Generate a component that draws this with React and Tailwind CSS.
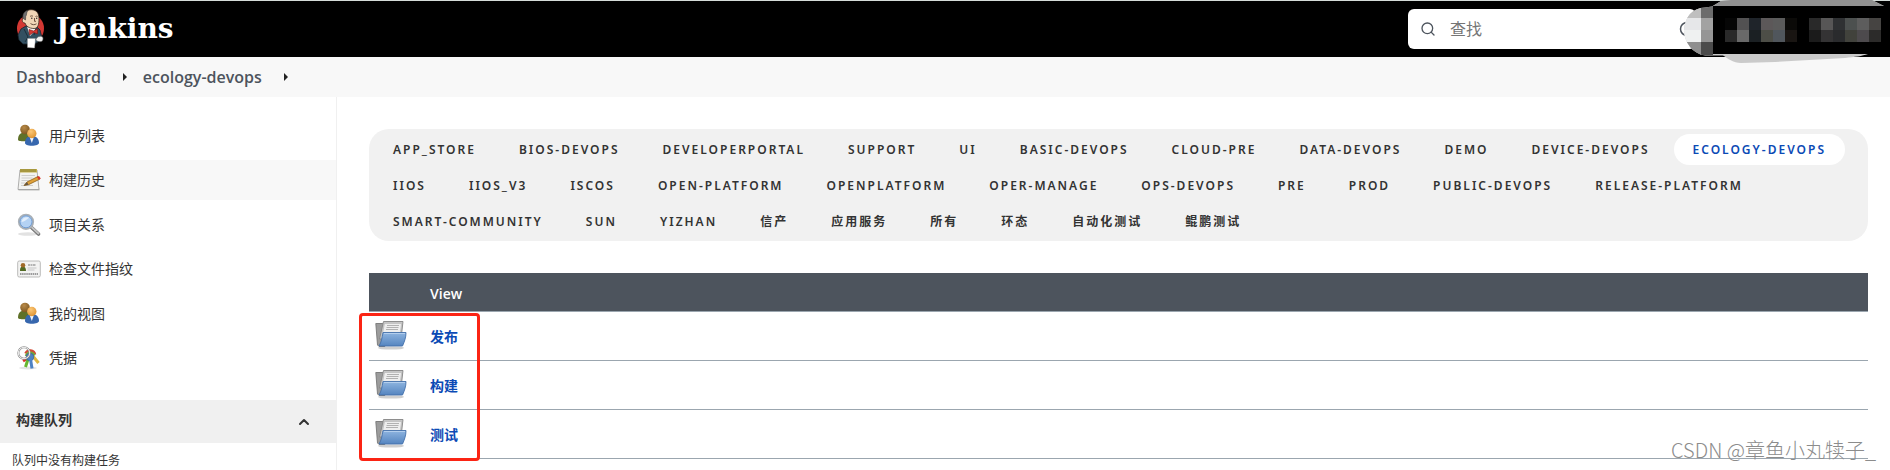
import { ChevronUp, Search } from "lucide-react";
import clsx from "clsx";

const VIEWS = [
  "APP_STORE",
  "BIOS-DEVOPS",
  "DEVELOPERPORTAL",
  "SUPPORT",
  "UI",
  "BASIC-DEVOPS",
  "CLOUD-PRE",
  "DATA-DEVOPS",
  "DEMO",
  "DEVICE-DEVOPS",
  "ECOLOGY-DEVOPS",
  "IIOS",
  "IIOS_V3",
  "ISCOS",
  "OPEN-PLATFORM",
  "OPENPLATFORM",
  "OPER-MANAGE",
  "OPS-DEVOPS",
  "PRE",
  "PROD",
  "PUBLIC-DEVOPS",
  "RELEASE-PLATFORM",
  "SMART-COMMUNITY",
  "SUN",
  "YIZHAN",
  "信产",
  "应用服务",
  "所有",
  "环态",
  "自动化测试",
  "鲲鹏测试",
];

const ACTIVE_VIEW = "ECOLOGY-DEVOPS";

const TASKS = [
  { label: "用户列表", icon: PeopleIcon },
  { label: "构建历史", icon: NotepadIcon, hovered: true },
  { label: "项目关系", icon: MagnifierIcon },
  { label: "检查文件指纹", icon: CardIcon },
  { label: "我的视图", icon: PeopleIcon },
  { label: "凭据", icon: KeysIcon },
];

const FOLDERS = ["发布", "构建", "测试"];

// Pixelated patches over the user name: x, y, colour
const PATCHES = [
  [50, 18, "#060606"], [62, 18, "#525152"], [74, 18, "#1f242a"], [86, 18, "#5c5859"], [98, 18, "#5b5b5b"], [110, 18, "#0b0a08"],
  [50, 30, "#292929"], [62, 30, "#696969"], [74, 30, "#1b2023"], [86, 30, "#4d4e47"], [98, 30, "#50565c"], [110, 30, "#191512"],
  [134, 18, "#292929"], [146, 18, "#575656"], [158, 18, "#2f3133"], [170, 18, "#4c504f"], [182, 18, "#5d5d5d"], [194, 18, "#464442"],
  [134, 30, "#1b1b1b"], [146, 30, "#343334"], [158, 30, "#2a2b2d"], [170, 30, "#41423c"], [182, 30, "#4d4a4d"], [194, 30, "#2c2b2a"],
];

function JenkinsLogo() {
  return (
    <svg viewBox="0 0 28 40" className="h-10 w-7" aria-hidden="true">
      <ellipse cx="14.5" cy="19.5" rx="13.5" ry="14" fill="#d33833" />
      <path d="M5 20 10 17h10l4 4 2 8-4 4-4 2H7l-4-4-1-5z" fill="#335061" stroke="#16252f" strokeWidth=".8" />
      <path d="M11 17.500 14 27l6-6-1-4z" fill="#f4f4f4" />
      <path d="M8 20l4 8-3 5M20 19l-2 7" fill="none" stroke="#182b37" strokeWidth=".9" />
      <path d="M7 9C7 3 11 .7 15.500.7c5 0 7.500 3.500 7.500 9 0 5.500-1 9.800-5 9.800-5 0-8-2.500-9-5.500C6.500 14 5.500 11.500 7 9z" fill="#f0d6b7" stroke="#3a2a1f" strokeWidth=".8" />
      <path d="M7 9c-.7-4 1.500-7 5-7.800C10 4 11 6 9.700 7.500L9.500 11 7.500 9.700z" fill="#6f6f6f" stroke="#2b2b2b" strokeWidth=".5" />
      <path d="M14 7.500c1-.8 2-.8 3-.2M19.500 7.500c.8-.5 1.500-.4 2.200 0M18.500 9v3.300h1.500M14.500 14.500c2 1.500 4 1.500 6 .3" fill="none" stroke="#4f3527" strokeWidth=".8" />
      <circle cx="15.800" cy="9.300" r=".7" fill="#222" />
      <circle cx="20.700" cy="9.300" r=".7" fill="#222" />
      <path d="M13 20.500 17.500 22l4-2.300v5L17.500 23.500 13.500 26z" fill="#d33833" stroke="#81100c" strokeWidth=".6" />
      <path d="M11.500 29.500h8l-1 9.500-7-.5z" fill="#fff" stroke="#9a9a9a" strokeWidth=".4" />
      <path d="M20 30c1-2 3.500-3.500 6-2.500 1.500 1 1.300 3.500 0 4.800-2 .8-4 .3-6-.8z" fill="#eee" stroke="#555" strokeWidth=".6" />
    </svg>
  );
}

function PeopleIcon() {
  return (
    <svg viewBox="0 0 24 24" className="size-6" aria-hidden="true">
      <defs>
        <radialGradient id="headBack" cx=".4" cy=".3" r=".8">
          <stop offset="0" stopColor="#b98a48" />
          <stop offset="1" stopColor="#75501c" />
        </radialGradient>
        <radialGradient id="headFront" cx=".4" cy=".3" r=".8">
          <stop offset="0" stopColor="#fcc877" />
          <stop offset="1" stopColor="#dc8e2a" />
        </radialGradient>
      </defs>
      <path d="M1 15.500C1 11 3.500 8.500 7.500 8.500S13 11 13 15c0 1.800-2.500 2.300-6 2.300S1 17 1 15.500z" fill="#5f7128" />
      <circle cx="8" cy="5.500" r="4.800" fill="url(#headBack)" />
      <path d="M8 19c0-4.500 2.500-7 6.800-7s7.200 2.500 7.200 7c0 1.500-3 2.700-7.200 2.700S8 20.500 8 19z" fill="#3767ae" />
      <path d="m12.800 13.500 2 5.500 2-5.500z" fill="#f2f5fa" />
      <circle cx="14.800" cy="9.500" r="4.700" fill="url(#headFront)" />
    </svg>
  );
}

function NotepadIcon() {
  return (
    <svg viewBox="0 0 24 24" className="size-6" aria-hidden="true">
      <path d="M1.500 20.500h21v2h-21z" fill="#bdbdbb" />
      <path d="M3 2h17l2 19.500H1z" fill="#f3f3f1" stroke="#9b9b99" strokeWidth=".8" />
      <path d="M3 1h17v3.500H3z" fill="#c4b04a" />
      <path d="M4 1v3M6 1v3M8 1v3M10 1v3M12 1v3M14 1v3M16 1v3M18 1v3" stroke="#7c7430" strokeWidth=".8" />
      <path d="M4.500 7.500H18M4.500 10h11M4.500 12.500h8M4 15h5M4 17.500h12" stroke="#c4c4c4" strokeWidth=".8" />
      <path d="M7 17.500 10 14l11-5.500 2 2.500-11.500 5.700z" fill="#dfa13a" stroke="#8d5f18" strokeWidth=".8" />
      <path d="m7 17.500 3-3.500 1.500 2.700z" fill="#635644" />
      <path d="m20 9 2-1 1.800 2.500-2 1.200z" fill="#d8342b" />
    </svg>
  );
}

function MagnifierIcon() {
  return (
    <svg viewBox="0 0 24 24" className="size-6" aria-hidden="true">
      <ellipse cx="11" cy="21" rx="10" ry="1.800" fill="#e2e2e2" />
      <path d="m14.500 14.500 7 6.500" stroke="#747474" strokeWidth="3.600" strokeLinecap="round" />
      <path d="m15 14.500 6.500 6" stroke="#c4c4c4" strokeWidth="1.800" strokeLinecap="round" />
      <circle cx="9" cy="8.800" r="7.200" fill="#a9cbf2" stroke="#aab0b6" strokeWidth="1.800" />
      <circle cx="9" cy="8.800" r="6" fill="#b4d2f4" stroke="#6391ca" strokeWidth=".8" />
      <path d="M4.500 9C5 5.500 8 3.500 12 4.700 9 7 8 8.500 4.500 9z" fill="#e3effc" />
    </svg>
  );
}

function CardIcon() {
  return (
    <svg viewBox="0 0 24 24" className="size-6" aria-hidden="true">
      <rect x=".7" y="4" width="22.600" height="16" rx="1.500" fill="#f3f3f2" stroke="#b4b4b2" strokeWidth=".9" />
      <path d="M3 14c0-3.500 1-4.500 3-4.500s3 1.500 3 4.500z" fill="#526b24" />
      <circle cx="6" cy="8.300" r="2.300" fill="#a06a28" />
      <path d="M11 8h8" stroke="#777" strokeWidth="1.200" strokeDasharray="2 .5" />
      <path d="M10.500 11h9M10.500 13h7" stroke="#c5c5c5" />
      <path d="M3 17h18" stroke="#808080" strokeWidth="1.400" strokeDasharray="1.500 .6" />
    </svg>
  );
}

function KeysIcon() {
  return (
    <svg viewBox="0 0 24 24" className="size-6" aria-hidden="true">
      <ellipse cx="11" cy="22" rx="9" ry="1.500" fill="#e4e4e4" />
      <path d="m14 10-8 5" stroke="#d8302a" strokeWidth="3" />
      <path d="m15 9 6.500 8" stroke="#dfb742" strokeWidth="3" />
      <path d="M12 10 8.500 21" stroke="#66b62e" strokeWidth="3" />
      <path d="M8.500 7.500a5 5 0 0 1 9.500 1" fill="none" stroke="#d24a35" strokeWidth="2.600" />
      <path d="M9 10a4.500 4.500 0 0 1 8.500-.5" fill="none" stroke="#74a83a" strokeWidth="2.500" />
      <circle cx="13" cy="11" r="3.800" fill="#4f82c3" stroke="#2c5b9b" strokeWidth=".6" />
      <path d="m13.500 13 1.500 9.500" stroke="#4f82c3" strokeWidth="3" />
      <circle cx="7" cy="7" r="5.700" fill="none" stroke="#8e8e8e" strokeWidth="2" />
      <circle cx="7" cy="7" r="5.700" fill="none" stroke="#efefef" strokeWidth="1" />
    </svg>
  );
}

function FolderIcon() {
  return (
    <svg viewBox="0 0 32 32" className="size-8" aria-hidden="true">
      <defs>
        <linearGradient id="folderFront" x1="0" y1="0" x2="0" y2="1">
          <stop offset="0" stopColor="#8fb5e0" />
          <stop offset="1" stopColor="#5585c0" />
        </linearGradient>
      </defs>
      <ellipse cx="16" cy="28" rx="13" ry="1.600" fill="#cfcfcf" />
      <path d="M.8 3.500h7l2 2.500V26.500H4L2.500 25z" fill="#9c9c9c" stroke="#777" strokeWidth=".9" />
      <path d="M8.500 1.500h19.500L26 19H4.500z" fill="#c6c6c6" stroke="#858585" strokeWidth=".9" />
      <path d="M9.500 3.500h17L25 16H7z" fill="#eeeeee" stroke="#b5b5b5" strokeWidth=".6" />
      <path d="M12 5.500h12M11.500 7.500h12M11 9.500h12" stroke="#a9a9a9" strokeWidth=".9" />
      <path d="M8 12.500h23c0 5-1.500 9-3.500 13.500H4c2.500-4 3-8 4-13.500z" fill="url(#folderFront)" stroke="#4470aa" strokeWidth=".9" />
      <path d="M9 13.500h21" stroke="#b8d1ee" strokeWidth=".9" />
    </svg>
  );
}

function MaskedUser() {
  return (
    <svg viewBox="0 0 215 66" className="absolute top-[-1px] right-0 h-[66px] w-[215px]" shapeRendering="crispEdges" aria-hidden="true">
      <defs>
        <clipPath id="smudge">
          <path d="M9 30C10 17 17 8 30 7.500L37 6.500 46 1 56 0H197L209 6H215V54H193C187 56 180 57 170 58L100 62 66 63C58 63 54 59 48 55.500H30C18 54 9 42 9 30z" />
        </clipPath>
      </defs>
      <circle cx="12" cy="29" r="6.500" fill="none" stroke="#4d545d" strokeWidth="1.500" shapeRendering="auto" />
      <g clipPath="url(#smudge)">
        <path d="M0 0h215v66H0z" fill="#cacaca" />
        <path d="M30 0h185v6H30z" fill="#919191" />
        <path d="M38 6h177v48H38z" fill="#000" />
        <path d="M9 6h17v12H9z" fill="#bfbfbf" />
        <path d="M26 6h12v12H26z" fill="#6c6c6c" />
        <path d="M9 18h17v12H9z" fill="#e6e7e9" />
        <path d="M26 18h12v12H26z" fill="#a2a2a2" />
        <path d="M9 30h17v12H9z" fill="#eff1f1" />
        <path d="M26 30h12v12H26z" fill="#959595" />
        <path d="M9 42h17v13H9z" fill="#8f8f8f" />
        <path d="M26 42h12v13H26z" fill="#4b4b4b" />
        {PATCHES.map(([x, y, fill]) => (
          <rect key={`${x}-${y}`} x={x} y={y} width="12" height="12" fill={fill} />
        ))}
      </g>
    </svg>
  );
}

function Crumb({ children }) {
  return (
    <li className="flex items-center">
      <a href="#" className="text-[#4d545d]">
        {children}
      </a>
      <svg viewBox="0 0 4 8" className="mr-4 ml-[22px] h-2 w-1" aria-hidden="true">
        <path d="M0 0 4 4 0 8z" fill="#222" />
      </svg>
    </li>
  );
}

export default function App() {
  return (
    <div className="relative flex min-h-screen flex-col overflow-hidden bg-white font-['Open_Sans','Noto_Sans_CJK_SC',sans-serif] text-sm text-[#333]">
      <header className="relative z-10 flex h-[57px] items-center border-t border-[#d5dcd9] bg-black pr-[194px] pl-4">
        <a href="#" className="flex items-center gap-3">
          <JenkinsLogo />
          <span className="font-['DejaVu_Serif',serif] text-[28px] leading-9 font-bold text-white">Jenkins</span>
        </a>
        <label className="ml-auto flex h-10 w-72 items-center gap-[14px] rounded-md bg-white pl-3">
          <Search className="size-4 shrink-0 text-[#4d545d]" strokeWidth={2} aria-hidden="true" />
          <input
            type="search"
            placeholder="查找"
            aria-label="查找"
            className="w-40 text-base outline-none placeholder:text-[#757575]"
          />
        </label>
        <MaskedUser />
      </header>

      <nav aria-label="breadcrumb" className="h-10 bg-[#f8f8f8] px-4">
        <ol className="flex h-full items-center text-base leading-6 font-semibold">
          <Crumb>Dashboard</Crumb>
          <Crumb>ecology-devops</Crumb>
        </ol>
      </nav>

      <div className="flex flex-1">
        <aside className="w-[337px] shrink-0 border-r border-[#f0f0f0] pt-[19px]">
          <ul className="flex h-[262px] flex-col justify-between">
            {TASKS.map(({ label, icon: Icon, hovered }) => (
              <li key={label}>
                <a href="#" className={clsx("flex h-10 items-center gap-2 pl-[17px]", hovered && "bg-[#f8f8f8]")}>
                  <Icon />
                  {label}
                </a>
              </li>
            ))}
          </ul>
          <section className="mt-[22px]">
            <div className="flex h-[43px] items-center justify-between bg-[#f0f0f0] pr-6 pl-4">
              <h2 className="pb-1 font-bold">构建队列</h2>
              <button type="button" aria-label="collapse">
                <ChevronUp className="size-4" strokeWidth={3} />
              </button>
            </div>
            <p className="pt-2 pl-3 text-xs leading-5">队列中没有构建任务</p>
          </section>
        </aside>

        <main className="min-w-0 flex-1 pt-8 pr-[22px] pl-8">
          <div className="flex flex-wrap gap-[5px] rounded-[20px] bg-[#f1f1f1] p-[5px] pb-1 font-['Noto_Sans','Noto_Sans_CJK_SC',sans-serif]">
            {VIEWS.map((view) => (
              <a
                key={view}
                href="#"
                className={clsx(
                  "flex h-[31px] items-center rounded-full px-[19px] text-xs font-semibold tracking-[2px]",
                  view === ACTIVE_VIEW && "bg-white text-[#0b4ab5]"
                )}
              >
                {view}
              </a>
            ))}
          </div>

          <div className="relative mt-8">
            <table className="w-full border-collapse text-left">
              <thead>
                <tr className="h-[38px] border-b border-[#9ba6af] bg-[#4d545d] text-white">
                  <th className="w-[61px]" aria-label="icon" />
                  <th className="pt-1 font-semibold">View</th>
                </tr>
              </thead>
              <tbody>
                {FOLDERS.map((name) => (
                  <tr key={name} className="h-[49px] border-b border-[#9ba6af]">
                    <td className="pl-[6px]">
                      <FolderIcon />
                    </td>
                    <td className="pt-[2px]">
                      <a href="#" className="font-bold text-[#0b4ab5]">
                        {name}
                      </a>
                    </td>
                  </tr>
                ))}
              </tbody>
            </table>
            {/* highlight around the folder list */}
            <div className="pointer-events-none absolute top-10 -left-[10px] h-[148px] w-[121px] rounded-sm border-3 border-[#fb2414]" />
          </div>
        </main>
      </div>

      <p className="absolute right-[14px] bottom-[7px] font-['Noto_Sans_CJK_SC',sans-serif] text-xl leading-7 font-light text-[#8c8c8c]">
        CSDN @章鱼小丸犊子_
      </p>
    </div>
  );
}
